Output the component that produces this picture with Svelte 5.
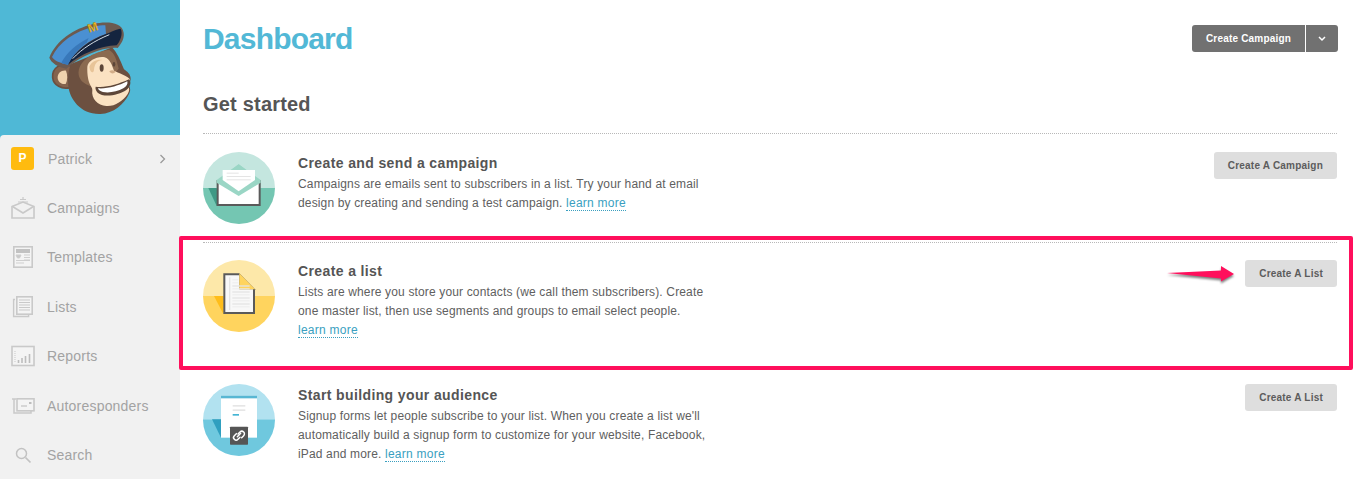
<script>
  const nav = ['Campaigns', 'Templates', 'Lists', 'Reports', 'Autoresponders', 'Search'];
</script>

{#snippet row(title, cta, icon, body)}
  <section class="row">
    <svg class="circle" viewBox="0 0 216 216" aria-hidden="true">{@render icon()}</svg>
    <div class="copy">
      <h3>{title}</h3>
      <p>{@render body()}</p>
    </div>
    <button class="cta">{cta}</button>
  </section>
{/snippet}

{#snippet mailIcon()}
  <defs><clipPath id="c1"><circle cx="108" cy="108" r="108" /></clipPath></defs>
  <g clip-path="url(#c1)">
    <rect width="216" height="108" fill="#c4e6df" />
    <rect y="108" width="216" height="108" fill="#74c6b2" />
    <polygon points="16,108 41,108 51,162 41,162" fill="#3f9985" />
    <polygon points="107,37 173,88 173,108 41,108 41,88" fill="#9ad6c5" />
    <rect x="41" y="84" width="132" height="78" fill="#5a5a5a" />
    <rect x="47" y="88" width="120" height="68" fill="#fff" />
    <polygon points="41,84 107,37 173,84 173,92 107,132 41,92" fill="#9ad6c5" />
    <polygon points="59,54 156,54 156,84 107,118 59,84" fill="#fff" />
    <rect x="71" y="62" width="36" height="3" fill="#e4e4e4" />
    <rect x="71" y="72" width="72" height="3" fill="#e4e4e4" />
    <rect x="71" y="82" width="72" height="3" fill="#e4e4e4" />
  </g>
{/snippet}

{#snippet listIcon()}
  <defs><clipPath id="c2"><circle cx="108" cy="108" r="108" /></clipPath></defs>
  <g clip-path="url(#c2)">
    <rect width="216" height="108" fill="#fde8a9" />
    <rect y="108" width="216" height="108" fill="#ffd45e" />
    <polygon points="33,108 61,108 61,162" fill="#ffbd1a" />
    <polygon points="61,40 109,40 156,88 156,162 61,162" fill="#5a5a5a" />
    <polygon points="67,46 109,46 109,88 150,88 150,156 67,156" fill="#f8f8f8" />
    <polygon points="109,40 156,88 109,88" fill="#ffd45e" />
    <rect x="78" y="52" width="4" height="98" fill="#e4e4e4" />
    {#each [76, 94, 112, 130] as y}
      <rect x="88" {y} width="52" height="4" fill="#e4e4e4" />
    {/each}
    {#each [58, 67, 85, 103, 121, 139] as y}
      <rect x="88" {y} width={y < 80 ? 18 : 52} height="3" fill="#ececec" />
    {/each}
  </g>
{/snippet}

{#snippet formIcon()}
  <defs><clipPath id="c3"><circle cx="108" cy="108" r="108" /></clipPath></defs>
  <g clip-path="url(#c3)">
    <rect width="216" height="106" fill="#b2e2f0" />
    <rect y="106" width="216" height="110" fill="#6fc8de" />
    <polygon points="27,106 54,106 54,161" fill="#2f9fbf" />
    <rect x="54" y="35" width="108" height="126" fill="#fff" />
    <rect x="54" y="35" width="108" height="8" fill="#58b7d3" />
    <rect x="89" y="63" width="38" height="5" fill="#e6e6e6" />
    <rect x="89" y="76" width="38" height="5" fill="#e6e6e6" />
    <rect x="89" y="90" width="19" height="5" fill="#45b5d4" />
    <rect x="81" y="128" width="54" height="54" rx="2" fill="#555" />
    <g fill="none" stroke="#fff" stroke-width="4.5" stroke-linecap="round">
      <path d="M105 150l6-6a7.5 7.5 0 0 1 11 11l-6 6" />
      <path d="M111 160l-6 6a7.5 7.5 0 0 1-11-11l6-6" />
      <path d="M103 158l10-10" />
    </g>
  </g>
{/snippet}

<div class="app">
  <aside class="sidebar">
    <div class="brand">
      <svg class="monkey" viewBox="0 0 330 345" aria-hidden="true">
        <!-- ear -->
        <path d="M122 168C92 156 66 174 68 202c2 24 28 38 54 30z" fill="#84634d" stroke="#6c5040" stroke-width="5" />
        <path d="M108 182c-14-2-26 8-25 22 1 12 12 20 24 18 6-12 6-28 1-40z" fill="#f0d3ae" />
        <!-- head -->
        <path d="M108 168L246 112c14 14 24 36 36 66 8 6 20 14 20 28 0 10-6 12-7 18 6 10 8 16 2 28-16 32-46 58-86 60-58 2-92-44-96-84-2-26 0-46 7-60z" fill="#6c5040" />
        <path d="M146 194c-4-40 44-70 92-74 16 10 22 30 28 56l-50 60c-26-6-64-10-70-42z" fill="#8b6a50" />
        <!-- face -->
        <path d="M172 170c2-18 30-32 52-28 16 4 22 24 28 40 10 6 46 16 48 28 0 8-6 10-7 16 6 10 6 16 0 26-14 22-40 38-64 36-26-2-46-22-42-48 2-10-17-16-15-70z" fill="#fbe2c2" />
        <path d="M178 170c6-16 26-24 40-20-18 2-24 12-26 30-2 12-12 8-14-10z" fill="#e8c498" />
        <ellipse cx="215" cy="174" rx="6" ry="11" fill="#5d4638" />
        <ellipse cx="252" cy="163" rx="4" ry="7" fill="#5d4638" />
        <path d="M238 184c6-6 16-4 18 2-4 6-14 6-18-2z" fill="#d2ad88" />
        <!-- grin -->
        <path d="M197 230c30 4 65-6 100-22 8 8 4 24-8 32-24 16-68 24-86 8-5-5-8-13-6-18z" fill="#5d4638" />
        <path d="M204 235c28 2 60-7 88-21 2 8-2 15-12 21-22 12-56 18-72 6-2-2-4-4-4-6z" fill="#fff" />
        <!-- cap -->
        <path d="M58 143C78 92 130 56 190 42c36-8 86-8 91 26 3 18-8 34-18 46-44-4-112 24-154 62-24-4-46-18-51-33z" fill="#6c5a50" />
        <path d="M66 141C86 96 134 64 192 50c12-3 24-4 34-4l2 26C176 88 134 124 114 164 92 160 72 152 66 141z" fill="#4a90d2" />
        <path d="M94 158C110 128 142 100 176 84l-6 14c-22 16-44 40-56 66-8-1-14-3-20-6z" fill="#3878ba" />
        <path d="M114 164C134 124 178 90 228 72c16-6 32-15 44-16 8 16-2 38-12 50-50 2-108 26-146 58z" fill="#14243f" />
        <path d="M128 146C156 116 194 92 238 74" fill="none" stroke="#d5dde4" stroke-width="3" />
        <text class="badge" x="178" y="68" transform="rotate(-18 178 68)">M</text>
      </svg>
    </div>
    <nav class="menu">
      <div class="item">
        <span class="avatar">P</span>
        <span class="label">Patrick</span>
        <svg class="chev" viewBox="0 0 8 10" aria-hidden="true"><path d="M1.500 1l4 4-4 4" fill="none" stroke="#9a9a9a" stroke-width="1.300" /></svg>
      </div>
      {#each nav as name}
        <div class="item">
          <svg class="ico" viewBox="0 0 24 24" aria-hidden="true">
            {#if name === 'Campaigns'}
              <path d="M1 10.500L12 6l11 4.500V22H1z" fill="none" stroke="#c9c9c9" stroke-width="1.600" />
              <path d="M1.500 10.500L12 17l10.500-6.500" fill="none" stroke="#c9c9c9" stroke-width="1.600" />
              <path d="M7 6h10M9 3.500h6M12 1v2" stroke="#c9c9c9" stroke-width="1.200" />
            {:else if name === 'Templates'}
              <rect x="2.800" y="1.800" width="18.400" height="20.400" fill="#f4f4f4" stroke="#c9c9c9" stroke-width="1.600" />
              <rect x="5" y="4" width="14" height="4" fill="#c2c2c2" />
              <path d="M5 10h5l-1.500 3h-2zM13 10h6M13 12.500h6M13 15h6M5 15.500h14M5 18h8" fill="#c9c9c9" stroke="#cfcfcf" />
            {:else if name === 'Lists'}
              <path d="M4 4.500H2.600v17h15V20" fill="none" stroke="#c9c9c9" stroke-width="1.400" />
              <rect x="5.800" y="1.800" width="15.400" height="17.400" fill="#f4f4f4" stroke="#c9c9c9" stroke-width="1.600" />
              <path d="M8 5h11M8 7.500h11M8 10h11M8 12.500h11M8 15h11" stroke="#c9c9c9" />
            {:else if name === 'Reports'}
              <rect x="1" y="2.500" width="22" height="19" fill="#f4f4f4" stroke="#c9c9c9" stroke-width="1.600" />
              <path d="M4 7v12" stroke="#c9c9c9" stroke-dasharray="1 1" />
              <path d="M7.500 19v-3M11 19v-5M14.500 19v-7M18.500 19v-9" stroke="#bdbdbd" stroke-width="1.600" />
            {:else if name === 'Autoresponders'}
              <path d="M1 5h4M3 5v14h17v-2" fill="none" stroke="#c9c9c9" stroke-width="1.500" />
              <rect x="6" y="4.800" width="17" height="12" fill="#f4f4f4" stroke="#c9c9c9" stroke-width="1.600" />
              <path d="M10 12h6" stroke="#c9c9c9" stroke-width="1.400" />
              <rect x="18" y="8" width="2.500" height="2" fill="#bdbdbd" />
            {:else}
              <circle cx="10.500" cy="10.500" r="5" fill="none" stroke="#c2c2c2" stroke-width="1.500" />
              <path d="M14.500 14.500l5 5" stroke="#c2c2c2" stroke-width="1.700" />
            {/if}
          </svg>
          <span class="label">{name}</span>
        </div>
      {/each}
    </nav>
  </aside>

  <main class="main">
    <header class="top">
      <h1>Dashboard</h1>
      <div class="split">
        <button class="dark primary">Create Campaign</button>
        <button class="dark more" aria-label="More">
          <svg viewBox="0 0 8 6" aria-hidden="true"><path d="M1 1l3 3 3-3" fill="none" stroke="#fff" stroke-width="1.500" /></svg>
        </button>
      </div>
    </header>
    <h2>Get started</h2>

    {#snippet body1()}Campaigns are emails sent to subscribers in a list. Try your hand at email<br />design by creating and sending a test campaign. <a href="#a">learn more</a>{/snippet}
    {#snippet body2()}Lists are where you store your contacts (we call them subscribers). Create<br />one master list, then use segments and groups to email select people.<br /><a href="#a">learn more</a>{/snippet}
    {#snippet body3()}Signup forms let people subscribe to your list. When you create a list we'll<br />automatically build a signup form to customize for your website, Facebook,<br />iPad and more. <a href="#a">learn more</a>{/snippet}

    {@render row('Create and send a campaign', 'Create A Campaign', mailIcon, body1)}
    {@render row('Create a list', 'Create A List', listIcon, body2)}
    {@render row('Start building your audience', 'Create A List', formIcon, body3)}
  </main>

  <div class="highlight"></div>
  <svg class="arrow" viewBox="0 0 72 20" aria-hidden="true">
    <path d="M0 8L54 5.500V1L67 9 54 16.500V13.500z" fill="#ff0f5c" />
  </svg>
</div>

<style>
  :global(body) { margin: 0; background: #fff; }
  .app {
    position: relative;
    display: flex;
    width: 1353px;
    height: 479px;
    overflow: hidden;
    font-family: "Liberation Sans", Arial, sans-serif;
  }
  .sidebar {
    flex: 0 0 180px;
    display: flex;
    flex-direction: column;
    background: #4fb8d6;
  }
  .brand {
    height: 135px;
    flex: none;
    padding: 10px 0 0 30px;
    box-sizing: border-box;
  }
  .monkey { display: block; width: 110px; height: 115px; }
  .badge {
    font: 700 36px "Liberation Sans", Arial, sans-serif;
    fill: #f3b91d;
    stroke: #7d6420;
    stroke-width: .8px;
  }
  .menu {
    flex: 1;
    background: #f1f1f1;
    border-top-left-radius: 4px;
  }
  .item {
    display: flex;
    align-items: center;
    height: 49.400px;
    padding-left: 11px;
    color: #a3a3a3;
    font-size: 14px;
    letter-spacing: .2px;
  }
  .item:first-child { margin-top: -1px; }
  .label { margin-left: 13px; }
  .avatar {
    width: 23px;
    height: 23px;
    flex: none;
    border-radius: 3px;
    background: #ffbb0f;
    color: #fff;
    font-size: 12px;
    font-weight: 700;
    line-height: 23px;
    text-align: center;
  }
  .avatar + .label { margin-left: 14px; }
  .chev { width: 8px; height: 10px; margin-left: auto; margin-right: 13px; }
  .ico { width: 24px; height: 24px; flex: none; margin-right: -1px; }

  .main { flex: 1; min-width: 0; padding: 0 16px 0 23px; color: #555; }
  .top {
    display: flex;
    justify-content: space-between;
    align-items: flex-start;
    height: 78px;
  }
  h1 {
    margin: 20px 0 0;
    color: #52b8d6;
    font-size: 30px;
    line-height: 38px;
    letter-spacing: -.8px;
  }
  .split { display: flex; gap: 1px; margin: 25px -1px 0 0; }
  .dark {
    height: 27px;
    padding: 0;
    border: 0;
    background: #717171;
    color: #fff;
    font: 700 10px "Liberation Sans", Arial, sans-serif;
    letter-spacing: .2px;
  }
  .primary { width: 113px; border-radius: 3px 0 0 3px; }
  .more { width: 32px; border-radius: 0 3px 3px 0; display: flex; align-items: center; justify-content: center; }
  .more svg { width: 8px; height: 6px; }
  h2 {
    margin: 0;
    height: 55px;
    color: #555;
    font-size: 20px;
    line-height: 52px;
    letter-spacing: .2px;
  }
  .row {
    display: flex;
    align-items: flex-start;
    padding: 18px 0 17px;
    border-top: 1px dotted #b8b8b8;
  }
  .row:nth-of-type(1) { padding-bottom: 18px; }
  .row:nth-of-type(2) { padding-top: 17px; }
  .row:nth-of-type(3) { padding-top: 17px; border-top-color: transparent; }
  .circle { width: 72px; height: 72px; flex: none; margin-right: 23px; }
  .copy { flex: 1; padding: 1px 0 9px; }
  h3 {
    margin: 0;
    height: 22px;
    font-size: 14px;
    line-height: 20px;
    letter-spacing: .38px;
    color: #555;
  }
  p {
    margin: 0;
    font-size: 12px;
    line-height: 19px;
    letter-spacing: .15px;
    color: #606060;
  }
  a { color: #3a9fbf; text-decoration: none; border-bottom: 1px dotted #3a9fbf; letter-spacing: .25px; }
  .cta {
    height: 27px;
    padding: 0 14px;
    border: 0;
    border-radius: 3px;
    background: #dedede;
    color: #5c5c5c;
    font: 700 10px "Liberation Sans", Arial, sans-serif;
    letter-spacing: .22px;
  }
  .highlight {
    position: absolute;
    left: 179px;
    top: 236px;
    width: 1174px;
    height: 134px;
    box-sizing: border-box;
    border: 4px solid #ff0f5c;
    border-radius: 2px;
  }
  .arrow {
    position: absolute;
    left: 1167px;
    top: 265px;
    width: 72px;
    height: 20px;
    filter: drop-shadow(0 2px 1px rgba(0, 0, 0, .5));
  }
</style>
